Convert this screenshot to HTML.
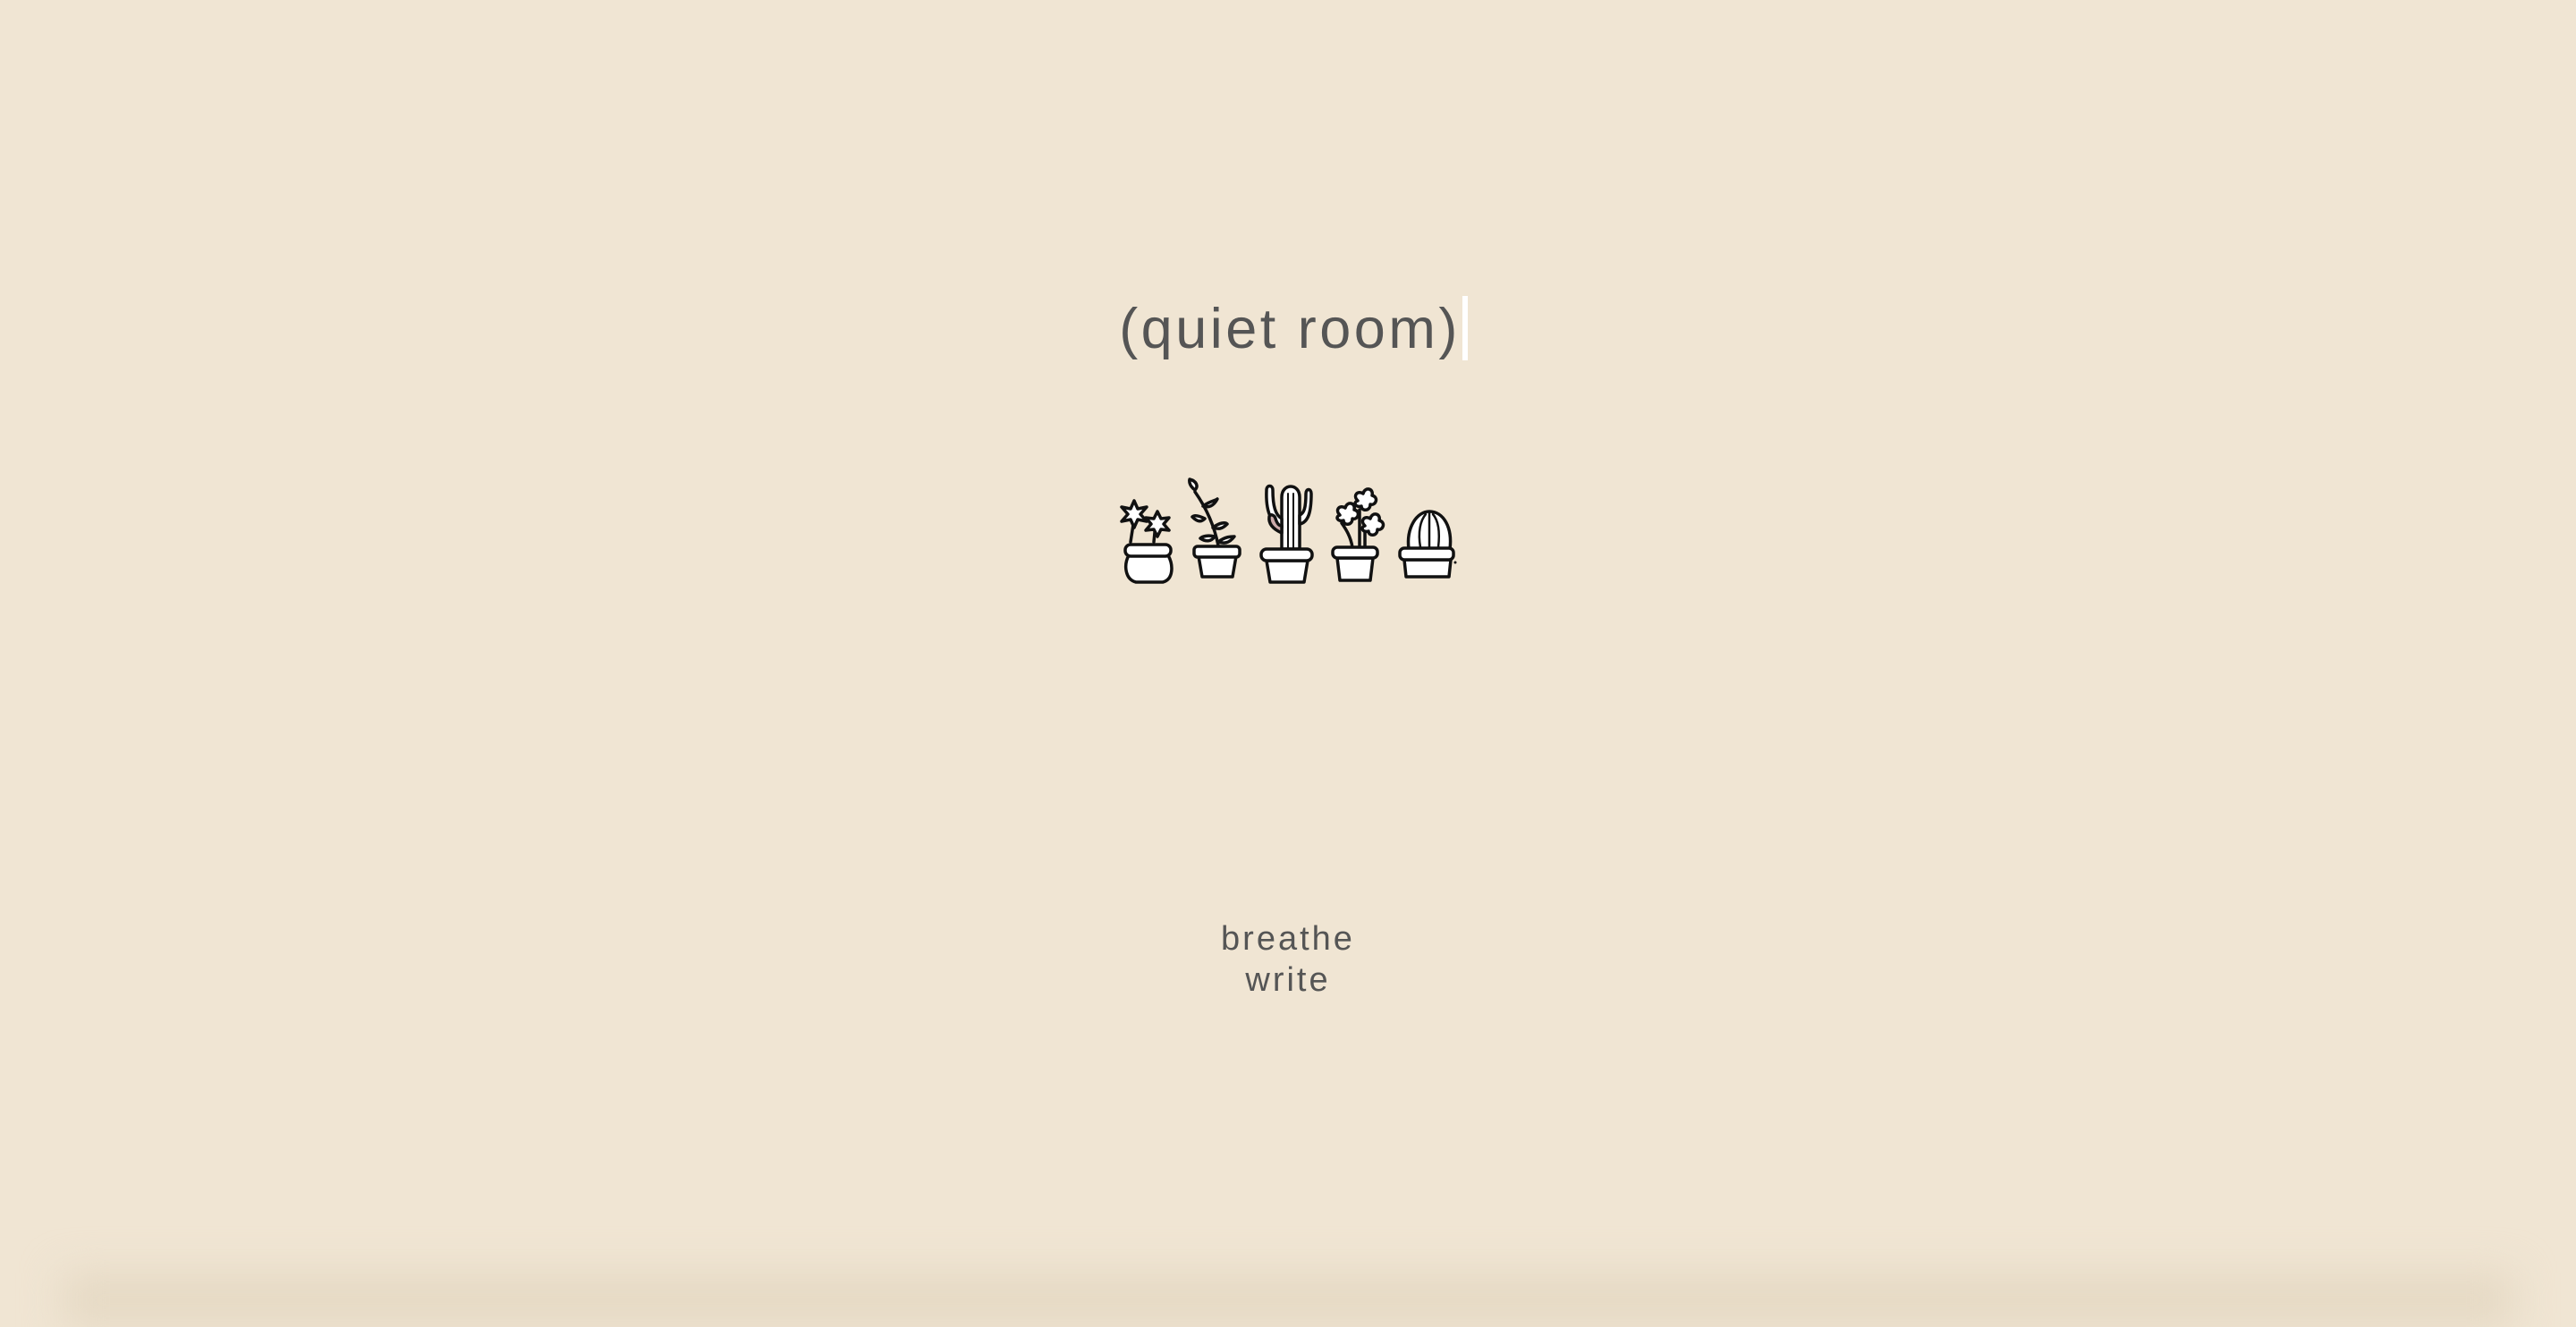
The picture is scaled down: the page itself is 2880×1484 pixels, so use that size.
<!DOCTYPE html>
<html><head><meta charset="utf-8"><style>
html,body{margin:0;padding:0}
body{width:2880px;height:1454px;background:#f0e5d3;position:relative;overflow:hidden;font-family:"Liberation Sans",sans-serif;color:#555}
.title{position:absolute;left:0;width:2880px;top:330px;text-align:center;font-size:63px;letter-spacing:3.5px;line-height:76px;padding-left:12px;box-sizing:border-box}
.cursor{display:inline-block;width:6px;height:72px;background:#fff;vertical-align:-14px;margin-left:2px}
.words{position:absolute;left:0;width:2880px;top:1027px;text-align:center;font-size:38px;letter-spacing:3px;line-height:46px}
.shade{position:absolute;left:70px;right:70px;bottom:-30px;height:60px;background:#e5d9c4;filter:blur(22px)}
svg{position:absolute;left:0;top:0}
</style></head><body>
<div class="title">(quiet room)<span class="cursor"></span></div>
<svg width="2880" height="800" viewBox="0 0 2880 800" fill="#fff" stroke="#111" stroke-width="3.5" stroke-linejoin="round" stroke-linecap="round">
<path d="M1264 606 L1268 580 M1290 606 L1292 585" fill="none"/>
<g><circle cx="1268" cy="575" r="6"/><path d="M1268 560 l4 9 l10 -2 l-7 8 l7 8 l-10 -2 l-4 9 l-4 -9 l-10 2 l7 -8 l-7 -8 l10 2z"/></g>
<g><path d="M1294 572 l4 8 l9 -1 l-6 7 l6 7 l-9 -1 l-4 8 l-4 -8 l-9 1 l6 -7 l-6 -7 l9 1z"/></g>
<path d="M1262 621 C1256 632 1258 648 1270 651 L1300 651 C1312 648 1312 632 1306 621 Z"/>
<rect x="1258" y="609" width="51" height="13" rx="6"/>
<path d="M1362 610 C1358 590 1350 570 1336 550" fill="none"/>
<path d="M1336 548 c-8 -6 -6 -12 -6 -12 c8 2 10 8 6 12z"/>
<path d="M1345 566 c8 -6 14 -6 16 -8 c-4 8 -10 10 -16 8z M1347 580 c-8 -4 -12 -4 -14 -2 c6 6 10 6 14 2z M1356 590 c8 -6 14 -6 16 -4 c-6 6 -10 6 -16 4z M1358 600 c-8 -2 -14 0 -16 2 c6 4 12 4 16 -2z M1362 606 c8 -6 14 -6 18 -6 c-6 8 -12 8 -18 6z"/>
<path d="M1340 622 L1344 645 L1378 645 L1382 622 Z"/>
<rect x="1335" y="611" width="51" height="12" rx="4"/>
<path d="M1433 614 L1433 556 C1433 540 1453 540 1453 556 L1453 614 Z"/>
<path d="M1433 590 C1420 585 1415 570 1416 548 C1416 542 1423 542 1423 548 C1423 566 1426 576 1433 580 Z"/>
<path d="M1453 586 C1463 584 1466 572 1466 552 C1466 546 1460 546 1460 552 C1460 568 1458 574 1453 576 Z"/>
<path d="M1433 596 C1424 592 1418 586 1419 578 C1420 574 1425 576 1426 580 C1428 586 1430 588 1433 588 Z" fill="#caa"/>
<path d="M1440 552 L1440 612 M1446 552 L1446 612" fill="none" stroke-width="2"/>
<path d="M1416 627 L1420 651 L1458 651 L1462 627 Z"/>
<rect x="1410" y="614" width="57" height="13" rx="6"/>
<path d="M1512 612 C1510 600 1505 592 1500 585 M1520 612 L1520 570 M1526 612 L1526 580" fill="none"/>
<path d="M1498 576 c-6 -6 0 -12 6 -8 c2 -8 12 -6 10 2 c8 2 4 12 -2 10 c0 8 -10 8 -10 2 c-6 2 -10 -4 -4 -6z"/>
<path d="M1518 560 c-6 -6 0 -12 6 -8 c2 -8 12 -6 10 2 c8 2 4 12 -2 10 c0 8 -10 8 -10 2 c-6 2 -10 -4 -4 -6z"/>
<path d="M1526 588 c-6 -6 0 -12 6 -8 c2 -8 12 -6 10 2 c8 2 4 12 -2 10 c0 8 -10 8 -10 2 c-6 2 -10 -4 -4 -6z"/>
<path d="M1495 624 L1498 649 L1532 649 L1535 624 Z"/>
<rect x="1490" y="612" width="50" height="12" rx="5"/>
<path d="M1575 614 C1572 590 1584 572 1598 572 C1614 572 1624 590 1621 614 Z"/>
<path d="M1588 612 C1585 595 1588 582 1594 575 M1598 612 L1598 574 M1608 612 C1610 595 1608 582 1602 575" fill="none" stroke-width="2.5"/>
<path d="M1570 626 L1572 645 L1620 645 L1622 626 Z"/>
<rect x="1565" y="613" width="60" height="13" rx="5"/>
<circle cx="1627" cy="629" r="1.5" fill="#111" stroke="none"/>
</svg>
<div class="words">breathe<br>write</div>
<div class="shade"></div>
</body></html>
